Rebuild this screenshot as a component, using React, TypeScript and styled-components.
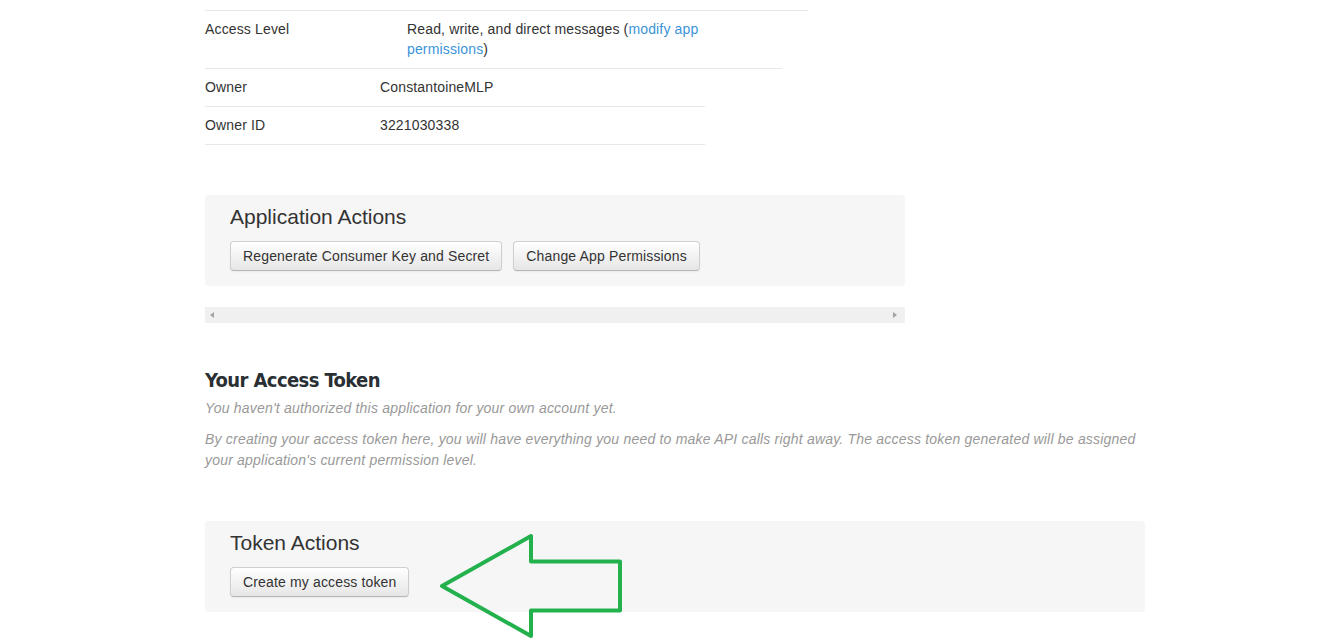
import React from "react";
import styled, { createGlobalStyle } from "styled-components";

const Global = createGlobalStyle`
  html, body { margin: 0; padding: 0; background: #fff; }
  body {
    font-family: "Liberation Sans", Arial, Helvetica, sans-serif;
    font-size: 14px;
    line-height: 20px;
    letter-spacing: 0.15px;
    color: #333;
  }
`;

const Page = styled.div`
  padding: 10px 0 40px 205px;
  width: 940px;
  display: flex;
  flex-direction: column;
`;

const TopRule = styled.div`
  width: 603px;
  height: 1px;
  background: #e8e8e8;
`;

const DetailTable = styled.div<{ $width: number; $label: number }>`
  width: ${(p) => p.$width}px;
  display: grid;
  grid-template-columns: ${(p) => p.$label}px 1fr;
`;

const Cell = styled.div<{ $padRight?: number }>`
  padding: 8px ${(p) => p.$padRight ?? 0}px 9px 0;
  border-bottom: 1px solid #e8e8e8;
  line-height: 20px;
`;

const Link = styled.a`
  color: #3b94d9;
  text-decoration: none;
`;

const ActionPanel = styled.section<{ $top: number; $width: number }>`
  position: relative;
  margin-top: ${(p) => p.$top}px;
  width: ${(p) => p.$width}px;
  box-sizing: border-box;
  background: #f6f6f6;
  border-radius: 4px;
  padding: 10px 25px 15px;
`;

const PanelTitle = styled.h3`
  margin: 0 0 13px;
  font-size: 21px;
  line-height: 23px;
  font-weight: normal;
  letter-spacing: 0;
  color: #333;
`;

const ButtonRow = styled.div`
  display: flex;
  gap: 11px;
`;

const Button = styled.button`
  font-family: "Liberation Sans", Arial, sans-serif;
  font-size: 14px;
  line-height: 20px;
  letter-spacing: 0.15px;
  color: #333;
  padding: 4px 12px;
  border: 1px solid #cfcfcf;
  border-bottom-color: #b5b5b5;
  border-radius: 4px;
  background: linear-gradient(to bottom, #ffffff, #e6e6e6);
  box-shadow: inset 0 1px 0 rgba(255, 255, 255, 0.2), 0 1px 2px rgba(0, 0, 0, 0.05);
  cursor: pointer;
`;

const ScrollTrack = styled.div`
  margin-top: 21px;
  width: 700px;
  height: 16px;
  background: #f0f0f0;
  display: flex;
  align-items: center;
  justify-content: space-between;
  padding: 0 8px 0 5px;
  box-sizing: border-box;
`;

const Arrow = styled.span<{ $dir: "left" | "right" }>`
  width: 0;
  height: 0;
  border-top: 3.5px solid transparent;
  border-bottom: 3.5px solid transparent;
  ${(p) =>
    p.$dir === "left"
      ? "border-right: 4px solid #a3a3a3;"
      : "border-left: 4px solid #a3a3a3;"}
`;

const SectionTitle = styled.h2`
  margin: 45px 0 6px;
  font-family: "Liberation Sans Narrow", "DejaVu Sans Condensed", "Liberation Sans", sans-serif;
  font-stretch: condensed;
  font-size: 20px;
  line-height: 24px;
  font-weight: bold;
  letter-spacing: -0.6px;
  color: #292f33;
`;

const Note = styled.p<{ $top?: number }>`
  margin: ${(p) => p.$top ?? 0}px 0 0;
  font-style: italic;
  color: #999;
  line-height: 21px;
  letter-spacing: 0.2px;
`;

const Annotation = styled.svg`
  position: absolute;
  left: 235px;
  top: 12px;
  overflow: visible;
`;

export default function App() {
  return (
    <>
      <Global />
      <Page>
        <TopRule />
        <DetailTable $width={577} $label={202}>
          <Cell>Access Level</Cell>
          <Cell $padRight={75}>
            Read, write, and direct messages (<Link href="#">modify app permissions</Link>)
          </Cell>
        </DetailTable>
        <DetailTable $width={500} $label={175}>
          <Cell>Owner</Cell>
          <Cell>ConstantoineMLP</Cell>
          <Cell>Owner ID</Cell>
          <Cell>3221030338</Cell>
        </DetailTable>

        <ActionPanel $top={50} $width={700}>
          <PanelTitle>Application Actions</PanelTitle>
          <ButtonRow>
            <Button>Regenerate Consumer Key and Secret</Button>
            <Button>Change App Permissions</Button>
          </ButtonRow>
        </ActionPanel>

        <ScrollTrack>
          <Arrow $dir="left" />
          <Arrow $dir="right" />
        </ScrollTrack>

        <SectionTitle>Your Access Token</SectionTitle>
        <Note>You haven't authorized this application for your own account yet.</Note>
        <Note $top={10}>
          By creating your access token here, you will have everything you need to make API calls right away. The access token generated will be assigned your application's current permission level.
        </Note>

        <ActionPanel $top={50} $width={940}>
          <PanelTitle>Token Actions</PanelTitle>
          <ButtonRow>
            <Button>Create my access token</Button>
          </ButtonRow>
          <Annotation width="186" height="106" viewBox="0 0 186 106">
            <polygon
              points="2,53 91,3 91,28.5 180,28.5 180,77.5 91,77.5 91,103"
              fill="none"
              stroke="#22b14c"
              strokeWidth="4"
              strokeLinejoin="round"
            />
          </Annotation>
        </ActionPanel>
      </Page>
    </>
  );
}
